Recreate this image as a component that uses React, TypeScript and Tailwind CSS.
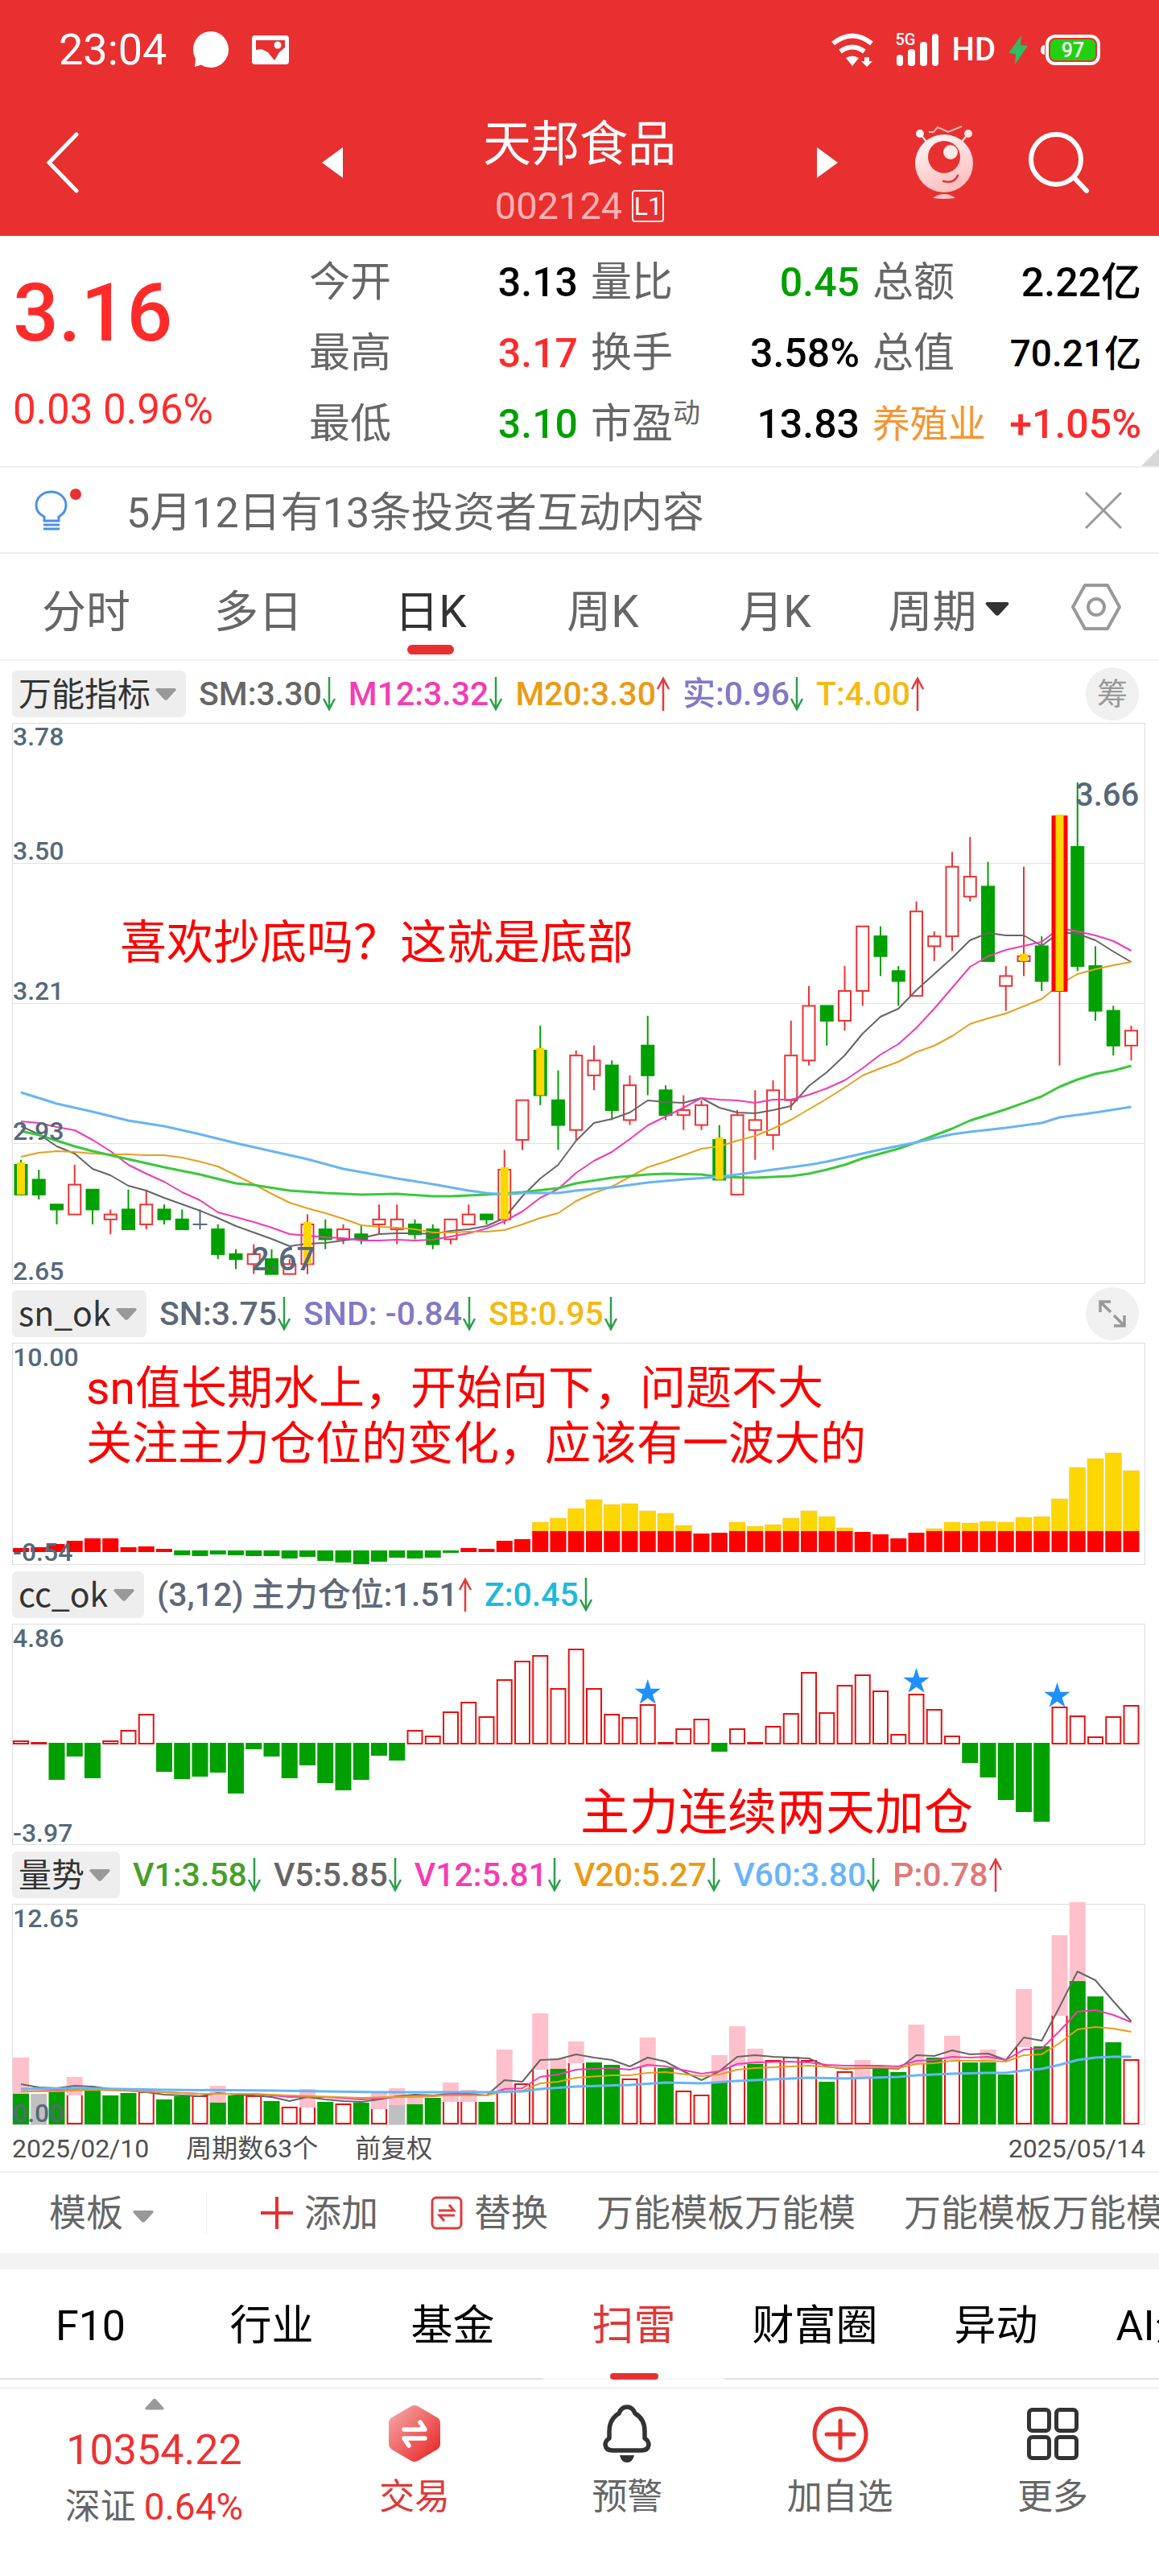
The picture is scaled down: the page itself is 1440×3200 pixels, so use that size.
import { useState } from "react";
import type { ReactNode } from "react";

type Trend = "up" | "down";

interface LegendItem {
  text: string;
  color: string;
  trend?: Trend;
}

const CHART_W = 1408;
const STEP = 22.25;
const cx = (i: number) => 11 + i * STEP;

const RED = "#e81010";
const GREEN = "#00a000";
const GOLD = "#ffd700";

// [kind, high, body top, body bottom, low], prices in cents
// r/g = rising/falling, R/G = the same with a gold marker, L = limit up, x = flat
type Candle = [string, number, number, number, number];
const candles: Candle[] = [
  ["G", 290, 289, 283, 283], ["g", 288, 286, 283, 282], ["g", 281, 281, 280, 277],
  ["r", 289, 285, 279, 279], ["g", 284, 284, 280, 277], ["r", 280, 279, 278, 275],
  ["g", 284, 280, 276, 276], ["r", 284, 281, 277, 276], ["g", 281, 280, 278, 277],
  ["g", 280, 278, 276, 276], ["x", 280, 277, 277, 276], ["g", 277, 276, 271, 270],
  ["g", 272, 271, 270, 268], ["r", 273, 271, 269, 267], ["g", 272, 270, 267, 267],
  ["r", 270, 269, 267, 267], ["R", 279, 277, 269, 267], ["g", 278, 276, 274, 272],
  ["r", 277, 276, 274, 273], ["g", 277, 275, 274, 273], ["r", 281, 278, 277, 275],
  ["r", 281, 278, 276, 273], ["g", 278, 277, 275, 274], ["g", 277, 276, 273, 272],
  ["r", 278, 278, 274, 273], ["r", 281, 279, 277, 277], ["g", 279, 279, 278, 277],
  ["R", 292, 288, 278, 277], ["r", 302, 302, 294, 292], ["G", 317, 312, 303, 301],
  ["g", 308, 302, 297, 292], ["r", 312, 311, 296, 294], ["r", 313, 310, 307, 304],
  ["g", 310, 309, 300, 298], ["r", 307, 305, 298, 297], ["g", 319, 313, 307, 303],
  ["g", 305, 304, 299, 298], ["r", 303, 300, 299, 296], ["r", 302, 301, 297, 296],
  ["G", 297, 294, 286, 286], ["r", 300, 299, 283, 283], ["r", 304, 298, 296, 290],
  ["r", 306, 304, 295, 292], ["r", 318, 311, 302, 300], ["r", 325, 321, 310, 309],
  ["g", 321, 321, 318, 313], ["r", 329, 324, 318, 316], ["r", 337, 337, 324, 321],
  ["g", 337, 335, 331, 327], ["g", 329, 328, 326, 321], ["r", 342, 340, 323, 323],
  ["r", 336, 335, 333, 330], ["r", 352, 349, 335, 332], ["r", 355, 347, 343, 342],
  ["g", 350, 345, 330, 330], ["r", 329, 327, 325, 320], ["R", 349, 331, 330, 327],
  ["g", 335, 333, 326, 324], ["L", 359, 359, 324, 309], ["g", 366, 353, 329, 328],
  ["g", 333, 329, 320, 318], ["g", 321, 320, 313, 311], ["r", 317, 316, 313, 310],
];

const priceLines = [
  {
    color: "#666666", width: 2,
    points: "0,501 1,511 2,526 3,535 4,554 5,562 6,575 7,581 8,590 9,598 10,606 11,615 12,625 13,633 14,641 15,650 16,647 17,646 18,643 19,640 20,635 21,634 22,634 23,635 24,631 25,629 26,625 27,615 28,588 29,566 30,549 31,519 32,497 33,492 34,484 35,469 36,471 37,472 38,466 39,478 40,484 41,485 42,481 43,476 44,451 45,434 46,413 47,386 48,365 49,355 50,332 51,312 52,292 53,270 54,261 55,264 56,264 57,277 58,260 59,262 60,270 61,284 62,297",
  },
  {
    color: "#f03cb4", width: 2,
    points: "0,495 1,497 2,502 3,506 4,518 5,532 6,549 7,560 8,570 9,583 10,593 11,608 12,614 13,620 14,627 15,635 16,637 17,639 18,640 19,643 20,643 21,642 22,643 23,642 24,638 25,634 26,628 27,619 28,607 29,590 30,579 31,559 32,544 33,533 34,517 35,500 36,489 37,478 38,466 39,468 40,469 41,472 42,468 43,468 44,462 45,454 46,444 47,429 48,412 49,399 50,379 51,355 52,329 53,303 54,290 55,282 56,277 57,272 58,255 59,259 60,264 61,271 62,283",
  },
  {
    color: "#e6a020", width: 2,
    points: "0,539 1,534 2,532 3,533 4,535 5,536 6,536 7,537 8,537 9,540 10,545 11,551 12,562 13,573 14,585 15,596 16,603 17,609 18,616 19,624 20,626 21,627 22,629 23,633 24,633 25,632 26,632 27,630 28,623 29,615 30,609 31,594 32,584 33,576 34,564 35,552 36,545 37,537 38,529 39,526 40,519 41,513 42,504 43,493 44,480 45,467 46,453 47,438 48,429 49,421 50,409 51,401 52,389 53,374 54,367 55,361 56,352 57,343 58,325 59,312 60,306 61,301 62,297",
  },
  {
    color: "#3cc83c", width: 3,
    points: "0,507 1,512 2,519 3,526 4,532 6,542 8,552 10,561 12,572 13,574 15,581 17,584 19,586 21,585 23,588 24,588 26,586 28,583 30,578 31,572 33,565 35,561 36,560 38,561 39,564 41,565 42,564 43,563 44,560 45,555 46,549 47,541 49,529 50,521 52,504 53,494 55,480 57,464 58,452 59,443 60,436 61,432 62,426",
  },
  {
    color: "#69b4f5", width: 3,
    points: "0,459 2,473 4,483 6,494 8,501 10,511 12,522 14,532 16,542 18,554 19,558 21,566 23,573 25,581 26,584 27,586 28,584 30,584 31,581 33,577 35,571 37,567 39,564 40,561 42,555 44,549 45,545 46,540 48,530 50,521 52,511 53,508 55,503 57,497 58,490 60,484 62,477",
  },
];

const snBars = [
  5, 6, 10, 14, 17, 17, 6, 7, 4, -6, -7, -5, -6, -7, -7, -10, -8, -13, -15, -17, -14, -9, -10, -9, -3, 5, 4, 14, 16,
  37, 42, 54, 65, 59, 60, 51, 48, 33, 23, 24, 37, 32, 34, 42, 51, 44, 30, 25, 22, 17, 24, 29, 37, 36, 38, 37, 43, 44,
  66, 105, 116, 123, 101,
];

const ccBars = [
  4, 2, -46, -17, -44, 4, 17, 37, -36, -45, -42, -37, -63, -8, -17, -44, -28, -50, -59, -46, -16, -22, 17, 10, 40, 52,
  34, 80, 103, 110, 69, 118, 69, 37, 33, 49, 2, 19, 31, -11, 19, 2, 22, 38, 89, 39, 73, 86, 66, 12, 62, 43, 10, -25,
  -43, -71, -86, -98, 46, 35, 9, 34, 48,
];

// [kind, height, height of the pink part behind]
const volumes: [string, number, number?][] = [
  ["g", 38, 83], ["s", 38], ["g", 41], ["r", 36, 59], ["g", 43], ["g", 36], ["g", 39], ["r", 40], ["g", 31],
  ["g", 35], ["r", 35], ["g", 27, 48], ["g", 36], ["r", 35], ["g", 29], ["r", 21], ["r", 21, 44], ["g", 28],
  ["r", 25], ["g", 27], ["r", 19, 40], ["s", 24, 45], ["g", 25, 35], ["g", 33], ["r", 28, 52], ["r", 28, 43],
  ["g", 28], ["r", 40, 93], ["r", 50], ["r", 68, 138], ["g", 69, 82], ["r", 76, 103], ["g", 77], ["g", 74],
  ["r", 56], ["r", 71, 108], ["g", 70], ["r", 41], ["r", 36], ["g", 53, 86], ["r", 72, 122], ["g", 75, 94],
  ["r", 79], ["r", 83], ["r", 79], ["g", 53], ["r", 65], ["r", 58, 80], ["g", 71], ["g", 65], ["r", 75, 124],
  ["g", 83], ["r", 80, 110], ["g", 77], ["g", 77, 93], ["g", 62], ["r", 96, 168], ["g", 97], ["r", 135, 235],
  ["g", 178, 276], ["g", 159], ["g", 102], ["r", 80],
];

const volumeLines = [
  {
    color: "#666666", width: 2,
    points: "0,224 1,228 2,229 3,226 4,227 5,230 6,232 7,234 8,237 9,238 10,239 11,235 12,237 13,238 14,240 15,245 16,240 17,243 18,245 19,246 20,243 21,239 22,237 23,238 24,236 25,236 26,238 27,219 28,221 29,194 30,193 31,187 32,191 33,194 34,202 35,191 36,196 37,208 38,219 39,208 40,190 41,188 42,190 43,191 44,192 45,202 46,205 47,204 48,204 49,205 50,188 51,189 52,182 53,187 54,186 55,194 56,166 57,170 58,128 59,84 60,95 61,121 62,146",
  },
  {
    color: "#f03cb4", width: 2,
    points: "0,230 2,231 4,230 8,234 10,236 13,236 15,240 17,240 19,243 21,240 23,239 24,237 26,238 27,230 28,229 29,215 30,212 31,206 33,204 34,206 35,200 36,202 38,211 39,208 40,199 41,197 43,196 44,197 45,200 46,201 48,201 49,202 50,195 51,194 52,190 53,191 54,190 55,194 56,181 57,180 58,158 59,134 60,132 61,138 62,147",
  },
  {
    color: "#e6a020", width: 2,
    points: "0,233 2,233 4,231 8,234 10,236 13,236 15,238 19,241 22,239 24,238 26,238 27,233 28,232 29,223 30,221 31,216 33,213 34,213 35,210 36,209 38,214 39,212 40,206 41,204 44,201 46,204 48,203 49,204 50,199 51,198 52,195 54,195 55,196 56,188 57,187 58,173 59,156 60,153 61,155 62,159",
  },
  {
    color: "#69b4f5", width: 3,
    points: "0,230 3,229 8,231 14,232 20,234 26,234 28,233 29,230 31,227 34,225 36,222 38,223 40,220 42,218 44,216 46,217 49,215 50,213 52,211 54,210 55,210 56,207 57,205 58,200 59,194 60,191 61,190 62,190",
  },
];

const toPath = (points: string) =>
  points
    .split(" ")
    .map((p) => {
      const [i, y] = p.split(",").map(Number);
      return `${cx(i)},${y}`;
    })
    .join(" ");

function Lines({ lines }: { lines: typeof priceLines }) {
  return (
    <>
      {lines.map((line) => (
        <polyline
          key={line.color}
          points={toPath(line.points)}
          fill="none"
          stroke={line.color}
          strokeWidth={line.width}
          strokeLinejoin="round"
        />
      ))}
    </>
  );
}

function Axis({ y, children }: { y: number; children: ReactNode }) {
  return (
    <text x={1} y={y} fontSize={32} fontWeight={500} fill="#55697b">
      {children}
    </text>
  );
}

function Chart({ height, label, children }: { height: number; label: string; children: ReactNode }) {
  return (
    <svg
      viewBox={`0 0 ${CHART_W} ${height}`}
      className="block w-full overflow-visible"
      role="img"
      aria-label={label}
    >
      <rect x={0.5} y={0.5} width={CHART_W - 1} height={height - 1} fill="none" stroke="#dcdcdc" />
      {children}
    </svg>
  );
}

function PriceChart() {
  const py = (cents: number) => 697 - (cents - 265) * 6.17;
  return (
    <Chart height={697} label="日K">
      {[174, 348, 522].map((y) => (
        <line key={y} x1={0} x2={CHART_W} y1={y + 0.5} y2={y + 0.5} stroke="#e2e2e2" />
      ))}
      {candles.map(([kind, high, top, bottom, low], i) => {
        const x = cx(i);
        const falling = kind.toLowerCase() === "g";
        const color = kind === "x" ? "#55697b" : falling ? GREEN : "#ee3333";
        if (kind === "L") return null;
        return (
          <g key={i} stroke={color} strokeWidth={2}>
            {high > top && <line x1={x} x2={x} y1={py(high)} y2={py(top)} />}
            {low < bottom && <line x1={x} x2={x} y1={py(bottom)} y2={py(low)} />}
            {kind === "x" ? (
              <line x1={x - 9} x2={x + 9} y1={py(top)} y2={py(top)} />
            ) : (
              <rect x={x - 7.5} y={py(top)} width={15} height={py(bottom) - py(top)} fill={falling ? GREEN : "white"} />
            )}
          </g>
        );
      })}
      <Lines lines={priceLines} />
      {candles.map(([kind, , top, bottom, low], i) => {
        if (!"RGL".includes(kind)) return null;
        const x = cx(i);
        return (
          <g key={i}>
            {kind === "L" && (
              <>
                <rect x={x - 10} y={py(top) - 2} width={20} height={py(bottom) - py(top) + 3} fill="#ff0000" />
                <line x1={x} x2={x} y1={py(bottom)} y2={py(low)} stroke="#ee3333" strokeWidth={2} />
              </>
            )}
            <rect x={x - 5} y={py(top) - 3} width={10} height={py(bottom) - py(top) + 3} fill={GOLD} />
          </g>
        );
      })}
      <Axis y={28}>3.78</Axis>
      <Axis y={170}>3.50</Axis>
      <Axis y={344}>3.21</Axis>
      <Axis y={518}>2.93</Axis>
      <Axis y={692}>2.65</Axis>
      <text x={297} y={680} fontSize={40} fontWeight={500} fill="#55697b">2.67</text>
      <text x={1321} y={103} fontSize={40} fontWeight={500} fill="#55697b">3.66</text>
      <text x={134} y={293} fontSize={58} fill="#ff0000">喜欢抄底吗？这就是底部</text>
    </Chart>
  );
}

function SnChart() {
  return (
    <Chart height={276} label="sn_ok">
      {snBars.map((h, i) => {
        const x = cx(i) - 10;
        if (h < 0) return <rect key={i} x={x} y={258} width={20} height={-h} fill={GREEN} />;
        return (
          <g key={i}>
            {h > 26 && <rect x={x} y={260 - h} width={20} height={h - 26} fill={GOLD} stroke="#f0b840" strokeWidth={0.5} />}
            <rect x={x} y={260 - Math.min(h, 26)} width={20} height={Math.min(h, 26)} fill="#ff0000" />
          </g>
        );
      })}
      <Axis y={29}>10.00</Axis>
      <Axis y={271}>-0.54</Axis>
      <text x={92} y={76} fontSize={57} fill="#ff0000">sn值长期水上，开始向下，问题不大</text>
      <text x={92} y={145} fontSize={57} fill="#ff0000">关注主力仓位的变化，应该有一波大的</text>
    </Chart>
  );
}

function Star({ x, y }: { x: number; y: number }) {
  const points = Array.from({ length: 10 }, (_, k) => {
    const r = k % 2 ? 6.5 : 17;
    const a = (Math.PI / 5) * k - Math.PI / 2;
    return `${x + r * Math.cos(a)},${y + r * Math.sin(a)}`;
  }).join(" ");
  return <polygon points={points} fill="#1e90ff" />;
}

function CcChart() {
  return (
    <Chart height={275} label="cc_ok">
      {ccBars.map((h, i) => {
        const x = cx(i) - 10;
        if (h < 0) return <rect key={i} x={x} y={148} width={20} height={-h} fill={GREEN} />;
        return (
          <rect key={i} x={x + 1} y={150 - h} width={18} height={h - 1} fill="white" stroke={RED} strokeWidth={2} />
        );
      })}
      <Star x={cx(35)} y={86} />
      <Star x={cx(50)} y={72} />
      <Star x={cx(58) - 3} y={90} />
      <Axis y={29}>4.86</Axis>
      <Axis y={271}>-3.97</Axis>
      <text x={706} y={256} fontSize={61} fill="#ff0000">主力连续两天加仓</text>
    </Chart>
  );
}

function VolumeChart() {
  const fills: Record<string, string> = { g: GREEN, s: "#c0c0c0", r: "white" };
  return (
    <Chart height={275} label="量势">
      {volumes.map(([kind, h, pink], i) => {
        const x = cx(i) - 10;
        const top = 274 - h;
        return (
          <g key={i}>
            {pink && <rect x={x} y={274 - pink} width={20} height={pink} fill="#ffc0cb" />}
            <rect x={x} y={top} width={20} height={h} fill={fills[kind]} />
            {kind === "r" && (
              <path
                d={`M${x + 1} ${top}V273H${x + 19}V${top}${pink ? "" : "Z"}`}
                fill="none"
                stroke={RED}
                strokeWidth={2}
              />
            )}
          </g>
        );
      })}
      <Lines lines={volumeLines} />
      <Axis y={29}>12.65</Axis>
      <Axis y={271}>0.00</Axis>
    </Chart>
  );
}

function Caret({ className }: { className?: string }) {
  return (
    <svg viewBox="0 0 26 15" className={className} fill="currentColor" aria-hidden="true">
      <path d="M2 0H24Q27 1 25 3L15 14Q13 15.500 11 14L1 3Q-1 1 2 0Z" />
    </svg>
  );
}

function TrendArrow({ trend }: { trend: Trend }) {
  return trend === "down" ? (
    <svg viewBox="0 0 18 44" className="h-11 w-[18px]" fill="none" stroke="#2ba04a" strokeWidth="2" aria-label="下降">
      <path d="M9 1V41M2 28L9 41L16 28" strokeWidth="2.500" />
    </svg>
  ) : (
    <svg viewBox="0 0 18 44" className="h-11 w-[18px]" fill="none" stroke="#e03c3c" strokeWidth="2" aria-label="上升">
      <path d="M9 43V3M2 16L9 3L16 16" strokeWidth="2.500" />
    </svg>
  );
}

function IndicatorBar({ name, items, children }: { name: string; items: LegendItem[]; children?: ReactNode }) {
  return (
    <div className="flex h-[73px] items-center pr-2">
      <div className="relative flex shrink-0 items-center">
        <select
          aria-label="指标"
          className="h-[58px] appearance-none rounded-md bg-[#eeeeee] pr-11 pb-1.5 pl-2 font-['Noto_Sans_CJK_SC',sans-serif] text-[41px] leading-[52px] text-[#333333]"
        >
          <option>{name}</option>
        </select>
        <Caret className="pointer-events-none absolute right-3 mt-0.5 h-[15px] w-[26px] text-[#999999]" />
      </div>
      <div className="ml-4 flex flex-1 items-center gap-[15px] text-[41px] leading-[58px] font-medium whitespace-nowrap">
        {items.map((item) => (
          <span key={item.text} className="flex items-center" style={{ color: item.color }}>
            {item.text}
            {item.trend && <TrendArrow trend={item.trend} />}
          </span>
        ))}
      </div>
      {children}
    </div>
  );
}

function StatusBar() {
  return (
    <div className="flex h-[124px] items-center justify-between pr-[73px] pl-[73px]">
      <div className="flex items-center">
        <span className="text-[54px] leading-[60px]">23:04</span>
        <svg viewBox="0 0 46 48" className="ml-8 h-12 w-[46px]" fill="white" aria-hidden="true">
          <path d="M23 1C35 1 45 11 45 23.500S35 46 23 46C18 46 14 44.500 11 42.500L3 45L4 35C2 31 1 28 1 23.500C1 11 11 1 23 1Z" />
        </svg>
        <svg viewBox="0 0 46 36" className="ml-7 h-9 w-[46px]" aria-hidden="true">
          <rect width="46" height="36" rx="4" fill="white" />
          <path d="M5 6H41V15L34 21L28 31L20 21L12 17L5 18Z" fill="#e83030" />
          <circle cx="32" cy="12" r="4.500" fill="white" />
        </svg>
      </div>
      <div className="flex items-center">
        <svg viewBox="0 0 52 42" className="h-[42px] w-[52px]" fill="none" stroke="white" aria-hidden="true">
          <path d="M2 13Q26 -6 50 13" strokeWidth="6" />
          <path d="M11 23Q26 12 41 23" strokeWidth="6" />
          <path d="M18 31Q26 26 34 31L26 41Z" fill="white" stroke="none" />
          <path d="M41 30H47V35H51L44 42L37 35H41Z" fill="white" stroke="none" />
        </svg>
        <div className="relative ml-7 h-10 w-[54px]">
          <span className="absolute -top-px left-0 text-[20px] leading-4 font-medium">5G</span>
          <svg viewBox="0 0 54 40" className="h-10 w-[54px]" fill="white" aria-hidden="true">
            <rect x="1" y="26" width="8" height="14" rx="4" />
            <rect x="15" y="19" width="9" height="21" rx="4" />
            <rect x="30" y="10" width="9" height="30" rx="4" />
            <rect x="45" y="0" width="8" height="40" rx="4" />
          </svg>
        </div>
        <span className="ml-4 text-[40px] leading-[60px] font-medium">HD</span>
        <svg viewBox="0 0 24 36" className="ml-4 h-9 w-6" fill="#2ebd62" aria-hidden="true">
          <path d="M16 0L15 12L24 13L8 36L9 23L0 22Z" />
        </svg>
        <div className="ml-4 h-3 w-[5px] rounded-l-full bg-white" />
        <div className="ml-px flex h-[38px] w-[68px] items-center justify-center rounded-xl border-4 border-white p-0.5">
          <span className="h-full w-full rounded-md bg-[#22d012] text-center text-[25px] leading-[27px] font-medium">97</span>
        </div>
      </div>
    </div>
  );
}

function Header() {
  return (
    <header className="bg-[#e83030] font-[Roboto,'Noto_Sans_CJK_SC',sans-serif] text-white">
      <StatusBar />
      <div className="grid h-[169px] grid-cols-[1fr_auto_1fr] items-center">
        <div className="pb-3.5 pl-14">
          <button type="button" aria-label="返回" className="block">
            <svg viewBox="0 0 44 76" className="h-[76px] w-11" fill="none" stroke="white" strokeWidth="5" strokeLinecap="round">
              <path d="M39 3L5 38L39 73" />
            </svg>
          </button>
        </div>
        <div className="flex w-[641px] items-center justify-between">
          <button type="button" aria-label="上一个" className="pb-3.5">
            <svg viewBox="0 0 26 38" className="h-[38px] w-[26px]" fill="white">
              <path d="M26 0V38L0 19Z" />
            </svg>
          </button>
          <div className="flex flex-col items-center gap-6 pt-1.5">
            <h1 className="text-[60px] leading-[64px]">天邦食品</h1>
            <div className="flex items-center gap-3 text-[47px] leading-10">
              <span className="text-[#ffb0b0]">002124</span>
              <span className="h-10 w-10 rounded-sm border-2 border-white/90 text-center text-[32px] leading-9">L1</span>
            </div>
          </div>
          <button type="button" aria-label="下一个" className="pb-3.5">
            <svg viewBox="0 0 26 38" className="h-[38px] w-[26px]" fill="white">
              <path d="M0 0V38L26 19Z" />
            </svg>
          </button>
        </div>
        <div className="flex items-center justify-end gap-[66px] pr-[86px] pb-3.5">
          <button type="button" aria-label="智能助手">
            <svg viewBox="0 0 74 92" className="h-[92px] w-[74px]">
              <defs>
                <linearGradient id="robot" x1="0" y1="0" x2="0.4" y2="1">
                  <stop offset="0.2" stopColor="#fff0f0" />
                  <stop offset="1" stopColor="#ffc0c0" />
                </linearGradient>
              </defs>
              <path d="M7 10L15 20M67 10L59 20" stroke="#ffe0e0" strokeWidth="2.500" />
              <circle cx="7" cy="10" r="5" fill="white" />
              <circle cx="67" cy="10" r="5" fill="#ffe4e4" />
              <path d="M18 8H24L29 2L42 8L59 1" fill="none" stroke="#ffb8b8" strokeWidth="2" />
              <circle cx="37" cy="47" r="36" fill="url(#robot)" />
              <circle cx="37" cy="39" r="20" fill="#e83030" />
              <circle cx="45" cy="33" r="9" fill="#ffe8e8" />
              <path d="M36 69Q49 73 54 62" fill="none" stroke="#e83030" strokeWidth="2.500" strokeLinecap="round" />
              <path d="M23 90Q37 80 51 90Q37 92 23 90Z" fill="#ffc4c4" />
            </svg>
          </button>
          <button type="button" aria-label="搜索">
            <svg viewBox="0 0 78 78" className="h-[78px] w-[78px]" fill="none" stroke="white" strokeLinecap="round">
              <circle cx="36" cy="35" r="31" strokeWidth="6" />
              <path d="M58 57L74 74" strokeWidth="6" />
            </svg>
          </button>
        </div>
      </div>
    </header>
  );
}

const stats = [
  { label: "今开", value: "3.13", color: "text-black" },
  { label: "量比", value: "0.45", color: "text-[#00a000]" },
  { label: "总额", value: "2.22亿", color: "text-black" },
  { label: "最高", value: "3.17", color: "text-[#ff2b2b]" },
  { label: "换手", value: "3.58%", color: "text-black" },
  { label: "总值", value: "70.21亿", color: "text-black", small: true },
  { label: "最低", value: "3.10", color: "text-[#00a000]" },
  { label: "市盈", sup: "动", value: "13.83", color: "text-black" },
  { label: "养殖业", sector: true, value: "+1.05%", color: "text-[#ff2b2b]" },
];

function Quote() {
  return (
    <section className="relative flex h-72 border-b-2 border-[#eeeeee] pr-[22px] pl-4 text-[#ff2b2b]">
      <div className="w-[368px] shrink-0 pt-[46px]">
        <p className="text-[100px] leading-[100px] font-medium">3.16</p>
        <p className="mt-10 text-[51px] leading-[60px]">0.03 0.96%</p>
      </div>
      <dl className="grid flex-1 grid-cols-3 content-start gap-x-4 pt-3.5">
        {stats.map((s) => (
          <div key={s.label} className="flex h-[88px] items-center justify-between whitespace-nowrap">
            {s.sector ? (
              <dt className="text-[47px] leading-[60px] text-[#f59632]">{s.label}</dt>
            ) : (
              <dt className="flex text-[51px] leading-[60px] text-[#666666]">
                {s.label}
                {s.sup && <sup className="top-0 text-[34px] leading-8">{s.sup}</sup>}
              </dt>
            )}
            <dd className={`leading-[60px] font-medium ${s.small ? "text-[46px]" : "text-[50px]"} ${s.color}`}>{s.value}</dd>
          </div>
        ))}
      </dl>
      <svg viewBox="0 0 22 22" className="absolute right-0 bottom-0 h-[22px] w-[22px]" fill="#d8d8d8" aria-hidden="true">
        <path d="M22 0V22H0Z" />
      </svg>
    </section>
  );
}

function Notice() {
  return (
    <section className="flex h-[107px] items-center border-b-2 border-[#eeeeee] pr-[46px] pl-[43px] text-[#666666]">
      <svg viewBox="0 0 60 56" className="h-14 w-[60px]" fill="none" stroke="#4a90e8" strokeWidth="3" aria-hidden="true">
        <path d="M12 41V36C6 33 2 28 2 22C2 12 10 5 20.500 5S39 12 39 22C39 28 35 33 30 36V41Z" />
        <path d="M11 46H31M11 51H31" />
        <circle cx="51" cy="8" r="7" fill="#e83030" stroke="none" />
      </svg>
      <p className="ml-[54px] flex-1 pt-2 text-[52px] leading-[60px]">5月12日有13条投资者互动内容</p>
      <button type="button" aria-label="关闭">
        <svg viewBox="0 0 46 46" className="h-[46px] w-[46px]" fill="none" stroke="#999999" strokeWidth="3">
          <path d="M1 1L45 45M45 1L1 45" />
        </svg>
      </button>
    </section>
  );
}

function PeriodTabs() {
  const [active, setActive] = useState("日K");
  return (
    <nav className="flex h-[133px] items-center border-b-2 border-[#eeeeee] text-[55px] leading-[64px] text-[#666666]">
      {["分时", "多日", "日K", "周K", "月K"].map((tab) => (
        <button
          key={tab}
          type="button"
          onClick={() => setActive(tab)}
          className={`relative h-full flex-1 pt-3 ${tab === active ? "text-[#333333]" : ""}`}
        >
          {tab}
          {tab === active && (
            <span className="absolute bottom-1.5 left-1/2 h-3 w-[58px] -translate-x-1/2 rounded-full bg-[#e83030]" />
          )}
        </button>
      ))}
      <div className="relative flex h-full flex-1 items-center justify-center pt-3">
        <select aria-label="周期" className="appearance-none bg-transparent pr-9">
          <option>周期</option>
        </select>
        <Caret className="pointer-events-none absolute right-[30px] mb-1.5 h-[17px] w-[30px] text-[#333333]" />
      </div>
      <button type="button" aria-label="设置" className="flex w-[156px] justify-center">
        <svg viewBox="0 0 64 60" className="h-[60px] w-16" fill="none" stroke="#999999" strokeWidth="4" strokeLinejoin="round">
          <path d="M18 3H46L61 30L46 57H18L3 30Z" />
          <circle cx="32" cy="30" r="10" />
        </svg>
      </button>
    </nav>
  );
}

function SwapIcon({ className }: { className?: string }) {
  return (
    <svg viewBox="0 0 40 42" className={className} fill="none" stroke="#e03c3c" strokeWidth="3" aria-hidden="true">
      <rect x="2" y="2" width="36" height="38" rx="5" />
      <path d="M10 18H29L23 11M30 24H11L17 31" />
    </svg>
  );
}

function TemplateBar() {
  return (
    <div className="flex h-[102px] items-center overflow-hidden border-t-2 border-[#eeeeee] pl-[61px] text-[46px] leading-[60px] whitespace-nowrap text-[#666666]">
      <div className="relative flex shrink-0 items-center">
        <select aria-label="模板" className="appearance-none bg-transparent pr-10">
          <option>模板</option>
        </select>
        <Caret className="pointer-events-none absolute right-0.5 mt-2 h-[17px] w-[26px] text-[#999999]" />
      </div>
      <div className="ml-[63px] h-[52px] w-px shrink-0 bg-[#eeeeee]" />
      <button type="button" className="ml-[67px] flex shrink-0 items-center gap-3.5">
        <svg viewBox="0 0 40 40" className="h-10 w-10" stroke="#e83030" strokeWidth="4" aria-hidden="true">
          <path d="M20 0V40M0 20H40" />
        </svg>
        添加
      </button>
      <button type="button" className="ml-[65px] flex shrink-0 items-center gap-3.5">
        <SwapIcon className="h-[42px] w-10" />
        替换
      </button>
      <button type="button" className="ml-[60px] shrink-0">万能模板万能模</button>
      <button type="button" className="ml-[60px] shrink-0">万能模板万能模</button>
    </div>
  );
}

function SectionTabs() {
  const [active, setActive] = useState("扫雷");
  return (
    <nav className="flex h-[137px] overflow-hidden text-[52px] leading-[60px] text-black">
      {["F10", "行业", "基金", "扫雷", "财富圈", "异动", "AI分析"].map((tab) => (
        <button
          key={tab}
          type="button"
          onClick={() => setActive(tab)}
          className={`relative h-full w-[225px] shrink-0 border-b-2 pt-1.5 whitespace-nowrap ${
            tab === active ? "border-[#f6f6f6] text-[#e03838]" : "border-[#e0e0e0]"
          }`}
        >
          {tab}
          {tab === active && (
            <span className="absolute -bottom-0.5 left-1/2 h-2 w-[60px] -translate-x-1/2 rounded-sm bg-[#e83030]" />
          )}
        </button>
      ))}
    </nav>
  );
}

function NavItem({ label, active, children }: { label: string; active?: boolean; children: ReactNode }) {
  return (
    <a href="#" className="flex flex-1 flex-col items-center pt-[18px]">
      <svg viewBox="0 0 72 74" className="h-[74px] w-[72px]" fill="none" aria-hidden="true">
        {children}
      </svg>
      <span className={`mt-3.5 text-[44px] leading-[56px] ${active ? "text-[#e03838]" : "text-[#666666]"}`}>{label}</span>
    </a>
  );
}

function BottomNav() {
  return (
    <nav className="flex h-[235px] border-t-[3px] border-[#f3f3f3]">
      <a href="#" className="flex w-[383px] flex-col items-center pt-[11px] text-[#f03030]">
        <Caret className="h-[15px] w-6 rotate-180 text-[#999999]" />
        <span className="mt-5 text-[52px] leading-[60px]">10354.22</span>
        <span className="mt-2.5 flex items-center gap-2.5 text-[46px] leading-[60px]">
          <span className="text-[44px] text-[#666666]">深证</span>0.64%
        </span>
      </a>
      <NavItem label="交易" active>
        <defs>
          <linearGradient id="trade" x1="0" y1="0" x2="1" y2="1">
            <stop offset="0.1" stopColor="#f5a0a0" />
            <stop offset="0.9" stopColor="#ea2c2c" />
          </linearGradient>
        </defs>
        <path d="M32 3Q36 1 40 3L64 17Q68 19 68 24V50Q68 54 64 57L40 71Q36 73 32 71L8 57Q4 54 4 50V24Q4 19 8 17Z" fill="url(#trade)" />
        <path d="M23 32H49L43 23M49 43H23L29 52" stroke="white" strokeWidth="5.500" strokeLinecap="round" strokeLinejoin="round" />
      </NavItem>
      <NavItem label="预警">
        <path
          d="M26 12Q29 4 36 4T46 12Q58 19 58 34V43Q63 46 63 51Q62 58 54 58H18Q10 58 9 51Q9 46 14 43V34Q14 19 26 12Z"
          stroke="#333333"
          strokeWidth="5.500"
          strokeLinejoin="round"
        />
        <path d="M27 64H45Q43 73 36 73T27 64Z" fill="#333333" />
      </NavItem>
      <NavItem label="加自选">
        <circle cx="36" cy="38" r="32" stroke="#e83030" strokeWidth="5" />
        <path d="M36 21V55M19 38H53" stroke="#e83030" strokeWidth="5" strokeLinecap="round" />
      </NavItem>
      <NavItem label="更多">
        <g stroke="#333333" strokeWidth="5">
          <rect x="6.500" y="7.500" width="25" height="26" rx="4" />
          <rect x="40.500" y="7.500" width="25" height="26" rx="4" />
          <rect x="6.500" y="41.500" width="25" height="26" rx="4" />
          <rect x="40.500" y="41.500" width="25" height="26" rx="4" />
        </g>
      </NavItem>
    </nav>
  );
}

export default function App() {
  return (
    <div className="bg-white font-[Roboto,'Noto_Sans_CJK_SC',sans-serif]">
      <Header />
      <Quote />
      <Notice />
      <PeriodTabs />

      <main className="pr-[17px] pl-[15px]">
        <div className="pt-1">
          <IndicatorBar
            name="万能指标"
            items={[
              { text: "SM:3.30", color: "#666666", trend: "down" },
              { text: "M12:3.32", color: "#f53cb4", trend: "down" },
              { text: "M20:3.30", color: "#eb9b14", trend: "up" },
              { text: "实:0.96", color: "#8278c8", trend: "down" },
              { text: "T:4.00", color: "#f5b914", trend: "up" },
            ]}
          >
            <button type="button" className="h-[66px] w-[66px] rounded-full bg-[#f0f0f0] text-[38px] leading-[66px] text-[#999999]">
              筹
            </button>
          </IndicatorBar>
        </div>
        <PriceChart />

        <IndicatorBar
          name="sn_ok"
          items={[
            { text: "SN:3.75", color: "#5f6978", trend: "down" },
            { text: "SND: -0.84", color: "#8278c8", trend: "down" },
            { text: "SB:0.95", color: "#f5b914", trend: "down" },
          ]}
        >
          <button type="button" aria-label="全屏" className="flex h-[66px] w-[66px] items-center justify-center rounded-full bg-[#f0f0f0]">
            <svg viewBox="0 0 34 34" className="h-[34px] w-[34px]" fill="none" stroke="#999999" strokeWidth="3.500">
              <path d="M15 2H2V15M2 2L15 15M19 32H32V19M32 32L19 19" />
            </svg>
          </button>
        </IndicatorBar>
        <SnChart />

        <IndicatorBar
          name="cc_ok"
          items={[
            { text: "(3,12) 主力仓位:1.51", color: "#5f6978", trend: "up" },
            { text: "Z:0.45", color: "#1eb9dc", trend: "down" },
          ]}
        />
        <CcChart />

        <IndicatorBar
          name="量势"
          items={[
            { text: "V1:3.58", color: "#46a028", trend: "down" },
            { text: "V5:5.85", color: "#666666", trend: "down" },
            { text: "V12:5.81", color: "#f53cb4", trend: "down" },
            { text: "V20:5.27", color: "#eb9b14", trend: "down" },
            { text: "V60:3.80", color: "#69b4fa", trend: "down" },
            { text: "P:0.78", color: "#e17878", trend: "up" },
          ]}
        />
        <VolumeChart />

        <div className="flex h-[57px] items-center gap-[46px] text-[32px] leading-10 text-[#505050]">
          <span>2025/02/10</span>
          <span>周期数63个</span>
          <span>前复权</span>
          <span className="ml-auto">2025/05/14</span>
        </div>
      </main>

      <TemplateBar />
      <div className="h-5 bg-[#f3f3f3]" />
      <SectionTabs />
      <div className="h-[9px]" />
      <BottomNav />
    </div>
  );
}
